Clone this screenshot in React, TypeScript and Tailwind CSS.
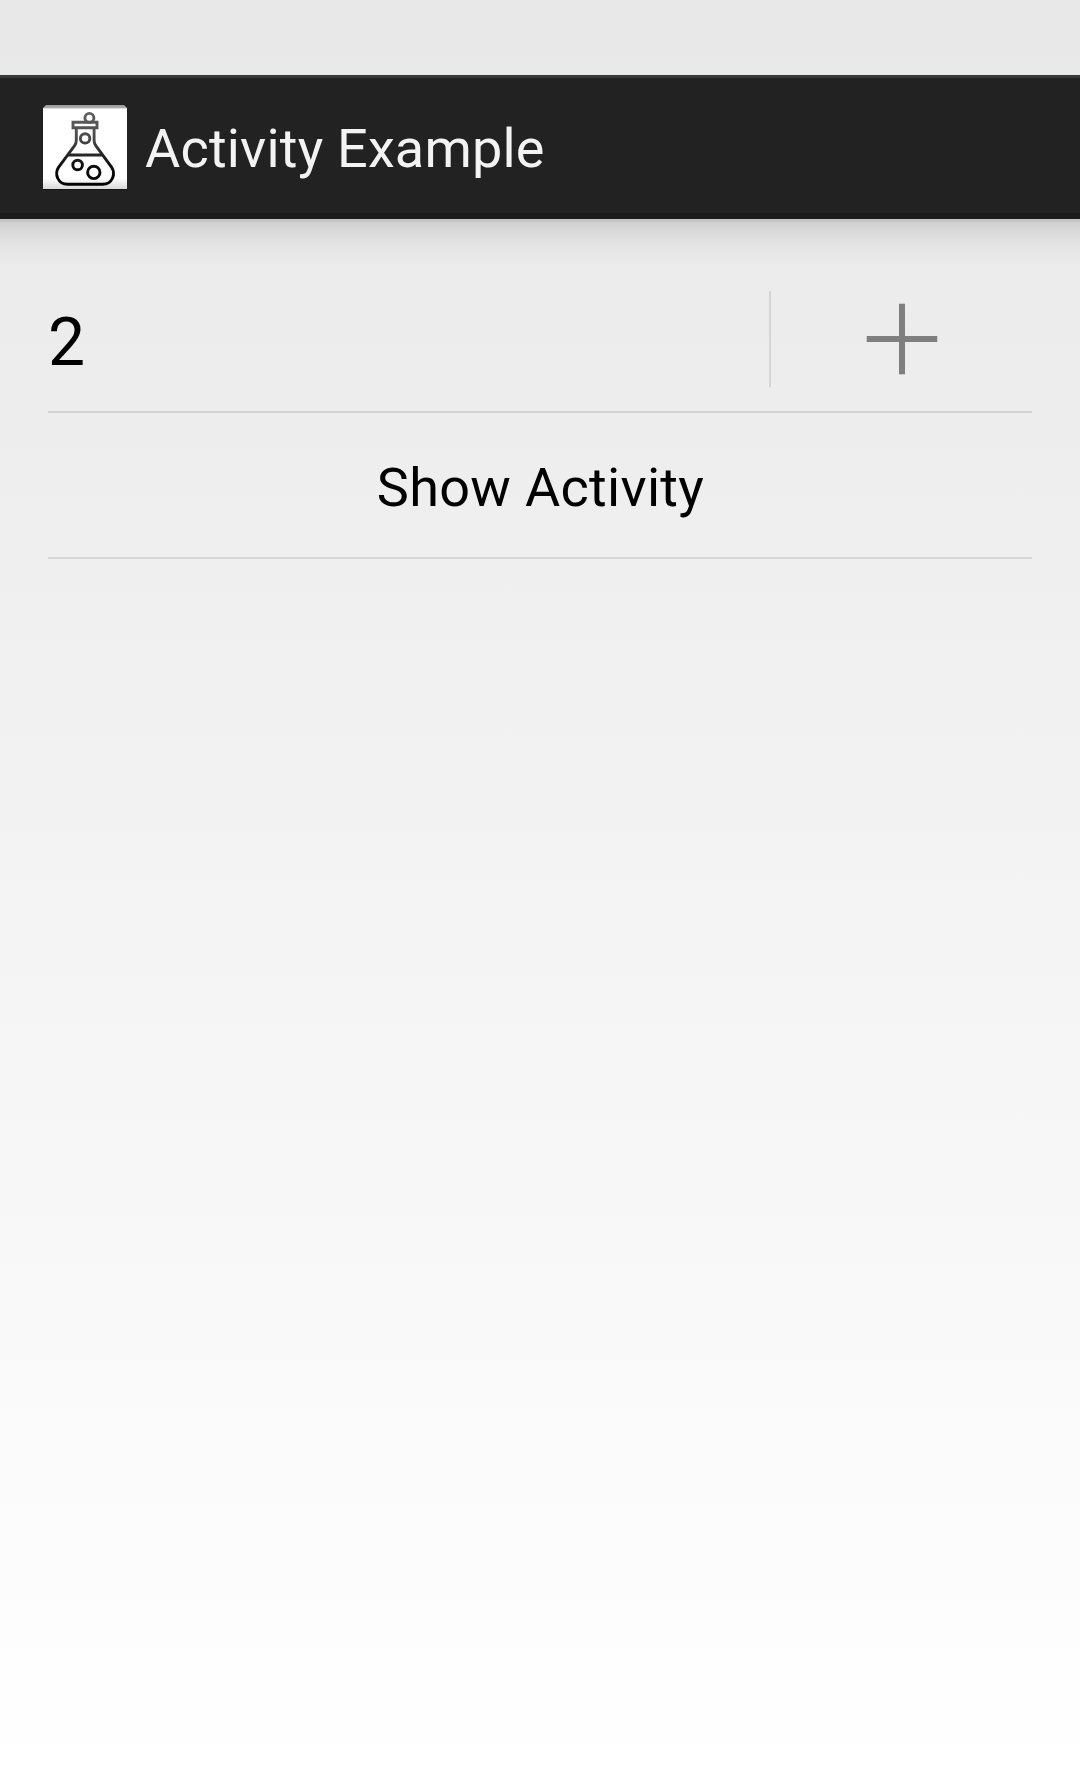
function FlaskIcon() {
  return (
    <svg width="84" height="86" viewBox="0 0 84 86" fill="none">
      <defs>
        <linearGradient id="ink" x1="0" y1="8" x2="0" y2="80" gradientUnits="userSpaceOnUse">
          <stop offset="0" stopColor="#606060" />
          <stop offset="0.35" stopColor="#4a4a4a" />
          <stop offset="0.75" stopColor="#0c0c0c" />
          <stop offset="1" stopColor="#000" />
        </linearGradient>
        <linearGradient id="tile" x1="0" y1="0" x2="0" y2="84" gradientUnits="userSpaceOnUse">
          <stop offset="0" stopColor="#999" />
          <stop offset="0.036" stopColor="#b0b0b0" />
          <stop offset="0.046" stopColor="#fff" />
          <stop offset="0.87" stopColor="#fff" />
          <stop offset="1" stopColor="#d8d8d8" />
        </linearGradient>
      </defs>
      <path d="M0 84.5h84" stroke="#151515" />
      <path d="M0 3L3 0h78l3 3v81H0z" fill="url(#tile)" />
      <g stroke="url(#ink)" strokeWidth="2.9">
        <circle cx="46.4" cy="12.9" r="4.5" />
        <path d="M30 17.3h24v5.4H30z" />
        <path d="M33.3 24v11.5c0 2.2-.7 3.6-1.9 5.4L15.5 62.4c-4.2 6.4-.8 16.9 9 16.9h35.2c9.8 0 13.2-10.5 9-16.9L53 40.9c-1.2-1.8-1.9-3.2-1.9-5.4V24" />
        <circle cx="42.1" cy="33.4" r="4.7" />
        <path d="M24.5 50.01L60 50" />
        <circle cx="34.6" cy="60" r="4.8" />
        <circle cx="50.8" cy="67.4" r="6.2" />
      </g>
    </svg>
  );
}

export default function App() {
  return (
    <div className="flex h-[1776px] w-[1080px] flex-col bg-linear-to-b from-[#e8e8e8] to-white pt-[75px] font-[Roboto,sans-serif] text-black">
      <header className="flex h-36 shrink-0 items-start border-t-3 border-b-6 border-t-[#373938] border-b-[#1b1b1b] bg-[#222] pt-[27px] pl-[43px]">
        <FlaskIcon />
        <h1 className="mt-3 ml-[18px] text-[54px] leading-[64px] tracking-[0.2px] whitespace-nowrap text-[#f3f3f3]">Activity Example</h1>
      </header>
      <div className="h-[3px] shrink-0 bg-[#c4c4c4]" />
      <div className="h-[45px] shrink-0 bg-linear-to-b from-black/11 via-black/3 to-transparent" />
      <main className="flex flex-col px-12">
        <div className="flex h-[146px] items-start border-b-2 border-[#d4d4d4]">
          <span className="mt-[37px] flex-1 text-[66px] leading-[78px]">2</span>
          <div className="mt-6 h-24 w-0.5 bg-[#d4d4d4]" />
          <button className="flex h-36 w-[261px] justify-start pt-9 pl-[95px]" aria-label="Add">
            <svg width="72" height="72" viewBox="0 0 72 72">
              <path d="M0 33h72v6H0zM33 0h6v72h-6z" fill="#ccc" />
              <path d="M1 33h70v6H1zM33 1h6v70h-6z" fill="#7f7f7f" />
            </svg>
          </button>
        </div>
        <button className="flex h-[146px] items-start justify-center border-b-2 border-[#d6d6d6] pt-[43px] pl-px text-[54px] leading-[64px] tracking-[0.3px]">
          Show Activity
        </button>
      </main>
    </div>
  );
}
